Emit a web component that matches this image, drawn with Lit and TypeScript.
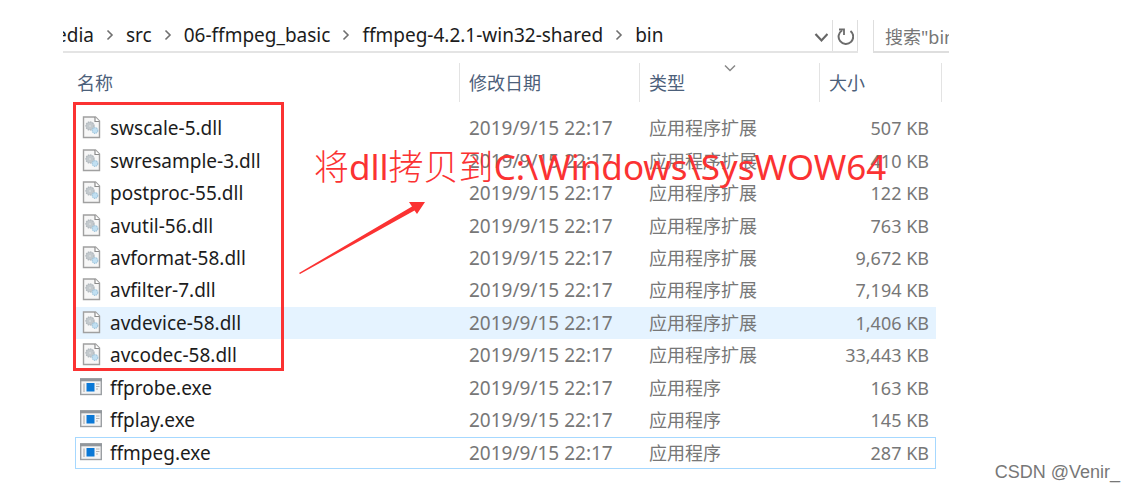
import { LitElement, html, css } from "lit";
import { customElement } from "lit/decorators.js";
import { classMap } from "lit/directives/class-map.js";

interface FileRow {
  name: string;
  size: string;
  state?: "hover" | "focus";
}

const FILES: FileRow[] = [
  { name: "swscale-5.dll", size: "507 KB" },
  { name: "swresample-3.dll", size: "410 KB" },
  { name: "postproc-55.dll", size: "122 KB" },
  { name: "avutil-56.dll", size: "763 KB" },
  { name: "avformat-58.dll", size: "9,672 KB" },
  { name: "avfilter-7.dll", size: "7,194 KB" },
  { name: "avdevice-58.dll", size: "1,406 KB", state: "hover" },
  { name: "avcodec-58.dll", size: "33,443 KB" },
  { name: "ffprobe.exe", size: "163 KB" },
  { name: "ffplay.exe", size: "145 KB" },
  { name: "ffmpeg.exe", size: "287 KB", state: "focus" },
];

const PATH = ["media", "src", "06-ffmpeg_basic", "ffmpeg-4.2.1-win32-shared", "bin"];

const dllIcon = html`<svg class="icon" viewBox="0 0 22 24" aria-hidden="true">
  <path d="M3.5 1h12l4 4v16.500h-16z" fill="#f7f7f7" stroke="#a0a0a0" stroke-width="1.4" />
  <path d="M15 1v4.500h4.500" fill="#fff" stroke="#8c8c8c" stroke-width="1.2" />
  <circle cx="10" cy="10" r="4" fill="#c3c9cd" stroke="#b3babf" stroke-width="1.4" stroke-dasharray="1.6 .7" />
  <circle cx="10" cy="10" r="1.1" fill="#d5dadd" />
  <circle cx="15" cy="14.500" r="2.800" fill="#c0dff2" stroke="#a3c6dc" stroke-width="1.2" stroke-dasharray="1.4 .6" />
</svg>`;

const exeIcon = html`<svg class="icon" viewBox="0 0 22 24" aria-hidden="true">
  <rect x=".700" y="3" width="20.600" height="15.500" fill="#f4f4f4" stroke="#9b9fa3" stroke-width="1.4" />
  <rect x="0" y="2.300" width="22" height="3" fill="#92979c" />
  <rect x="6.500" y="7" width="8" height="8.500" fill="#0a78d6" />
  <path d="M4 7.500v8.500M16 8h3.500M16 10.500h3.500M16 13h2" stroke="#b3b3b3" stroke-width="1.200" />
</svg>`;

@customElement("app-root")
export class AppRoot extends LitElement {
  static styles = css`
    :host {
      display: block;
      position: relative;
      background: #fff;
      color: #1c1c1c;
      font: 19px/24px "Noto Sans", "Noto Sans CJK SC", sans-serif;
    }
    * {
      box-sizing: border-box;
    }
    .window {
      padding: 20px 186px 21px 63px;
    }
    .bar {
      display: flex;
      gap: 15px;
      height: 33px;
      overflow: hidden;
    }
    .address {
      display: flex;
      flex: 1;
      min-width: 0;
      border-bottom: 2px solid #e4e4e4;
    }
    .crumbs {
      display: flex;
      flex: 1;
      align-items: center;
      min-width: 0;
      margin: 0;
      padding: 0 0 2px;
      list-style: none;
      white-space: nowrap;
      overflow: hidden;
    }
    .crumb {
      display: flex;
      align-items: center;
    }
    .crumb:first-child a {
      display: flex;
      justify-content: flex-end;
      width: 31px;
      overflow: hidden;
    }
    .crumb a {
      color: inherit;
      text-decoration: none;
    }
    .sep {
      width: 8px;
      height: 12px;
      margin: 0 12px;
    }
    .tool {
      display: grid;
      place-items: center;
      width: 26px;
      padding: 0;
      border: 0;
      background: none;
    }
    .refresh {
      border: solid #dedede;
      border-width: 0 1px;
    }
    .tool svg {
      width: 18px;
      height: 20px;
    }
    .search {
      width: 76px;
      overflow: hidden;
      border: solid #dedede;
      border-width: 0 0 2px 1px;
    }
    .search input {
      width: 160px;
      height: 100%;
      padding: 0 0 0 11px;
      border: 0;
      outline: 0;
      background: none;
      color: #767676;
      font: inherit;
      font-size: 18px;
    }
    .list {
      position: relative;
      padding: 10px 7px 0 12px;
    }
    table {
      width: 100%;
      height: 406px;
      table-layout: fixed;
      border-spacing: 0;
      font-size: 18px;
    }
    .c-date,
    .c-type {
      width: 180px;
    }
    .c-size {
      width: 116px;
    }
    .c-edge {
      width: 6px;
    }
    th {
      height: 49px;
      padding: 0;
      color: #4c607a;
      font-weight: 400;
      text-align: left;
      vertical-align: top;
    }
    .head {
      position: relative;
      height: 39px;
      padding: 8px 0 0 9px;
      border-right: 1px solid #e3e3e3;
    }
    .first {
      padding-left: 2px;
    }
    .sort {
      position: absolute;
      top: 1px;
      left: 47%;
      width: 12px;
      height: 8px;
    }
    td {
      padding: 0 0 0 9px;
      border: 1px solid transparent;
      border-width: 1px 0;
      color: #777;
      white-space: nowrap;
    }
    td.name {
      padding-left: 4px;
      border-left-width: 1px;
      color: #1c1c1c;
      font-size: 19px;
    }
    td.date {
      font-size: 19px;
    }
    td.size {
      padding-right: 6px;
      border-right-width: 1px;
      text-align: right;
    }
    .file {
      display: flex;
      align-items: center;
      gap: 8px;
    }
    .icon {
      width: 22px;
      height: 24px;
    }
    .hover td {
      background: #e5f3ff;
    }
    .focus td {
      border-color: #a6d8ff;
    }
    .frame {
      position: absolute;
      top: 49px;
      left: 10px;
      width: 211px;
      height: 269px;
      border: 3px solid #fb3232;
    }
    .note {
      position: absolute;
      top: 88px;
      left: 251px;
      color: #fb3232;
      font-size: 35px;
      line-height: 48px;
      white-space: nowrap;
    }
    .note .cjk {
      font-family: "Noto Sans CJK SC", sans-serif;
      font-weight: 300;
    }
    .arrow {
      position: absolute;
      top: 146px;
      left: 235px;
      width: 130px;
      height: 78px;
    }
    .credit {
      position: absolute;
      right: 15px;
      bottom: 8px;
      color: #777;
      font: 18px/20px "Liberation Sans", sans-serif;
    }
  `;

  render() {
    return html`
      <main class="window">
        <div class="bar">
          <nav class="address">
            <ol class="crumbs">
              ${PATH.map(
                (part, i) => html`<li class="crumb">
                  ${i
                    ? html`<svg class="sep" viewBox="0 0 8 12" aria-hidden="true">
                        <path d="M1.500 1.500l4.500 4.500-4.500 4.500" fill="none" stroke="#707070" stroke-width="1.600" />
                      </svg>`
                    : ""}<a href="#"><span>${part}</span></a>
                </li>`
              )}
            </ol>
            <button class="tool" aria-label="history">
              <svg viewBox="0 0 18 20" aria-hidden="true">
                <path d="M5.500 8l6 6.500 6-6.500" fill="none" stroke="#666" stroke-width="2.200" />
              </svg>
            </button>
            <button class="tool refresh" aria-label="refresh">
              <svg viewBox="0 0 18 20" aria-hidden="true">
                <path d="M14.500 5a7.300 7.300 0 1 1-8.500-.500" fill="none" stroke="#6c6c6c" stroke-width="2" />
                <path d="M3 3.500h5v5.500" fill="none" stroke="#6c6c6c" stroke-width="1.800" />
              </svg>
            </button>
          </nav>
          <div class="search"><input type="text" aria-label="search" value='搜索"bin"' /></div>
        </div>

        <section class="list">
          <table>
            <colgroup>
              <col />
              <col class="c-date" />
              <col class="c-type" />
              <col class="c-size" />
              <col class="c-edge" />
            </colgroup>
            <thead>
              <tr>
                <th><div class="head first">名称</div></th>
                <th><div class="head">修改日期</div></th>
                <th>
                  <div class="head">
                    类型
                    <svg class="sort" viewBox="0 0 12 8" aria-hidden="true">
                      <path d="M1 1.500l5 5 5-5" fill="none" stroke="#888" stroke-width="1.500" />
                    </svg>
                  </div>
                </th>
                <th colspan="2"><div class="head">大小</div></th>
              </tr>
            </thead>
            <tbody>
              ${FILES.map((f) => {
                const dll = f.name.endsWith(".dll");
                return html`<tr class=${classMap({ hover: f.state === "hover", focus: f.state === "focus" })}>
                  <td class="name"><div class="file">${dll ? dllIcon : exeIcon}<span>${f.name}</span></div></td>
                  <td class="date">2019/9/15 22:17</td>
                  <td>${dll ? "应用程序扩展" : "应用程序"}</td>
                  <td class="size">${f.size}</td>
                </tr>`;
              })}
            </tbody>
          </table>
          <div class="frame"></div>
          <div class="note"><span class="cjk">将</span>dll<span class="cjk">拷贝到</span>C:\\Windows\\SysWOW64</div>
          <svg class="arrow" viewBox="0 0 130 78" aria-hidden="true">
            <path d="M1 74L114 7.500L111 3H127L119 15L116.500 11.500L2 75z" fill="#fb3232" />
          </svg>
        </section>
      </main>
      <footer class="credit">CSDN @Venir_</footer>
    `;
  }
}
